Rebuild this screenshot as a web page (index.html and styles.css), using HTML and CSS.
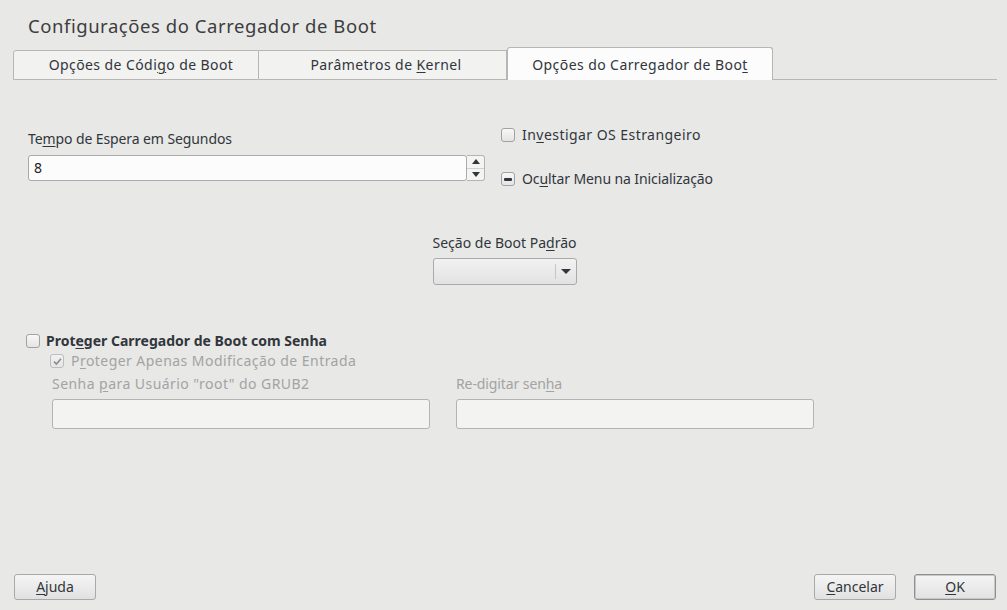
FILE: index.html
```html
<!DOCTYPE html>
<html lang="pt">
<head>
<meta charset="utf-8">
<title>Configurações do Carregador de Boot</title>
<link rel="stylesheet" href="styles.css">
</head>
<body>
<div class="dialog">
  <h1 class="title">Configurações do Carregador de Boot</h1>

  <div class="tabbar">
    <div class="tab tab-1">Opções de Códi<u>g</u>o de Boot</div>
    <div class="tab tab-2">Parâmetros de <u>K</u>ernel</div>
    <div class="tab tab-active">Opções do Carregador de Boo<u>t</u></div>
    <div class="tab-fill"></div>
  </div>

  <div class="row-top">
    <div class="col-left">
      <div class="label">Te<u>m</u>po de Espera em Segundos</div>
      <div class="spinbox">
        <div class="spin-input">8</div>
        <div class="spin-buttons">
          <div class="spin-btn"><span class="tri-up"></span></div>
          <div class="spin-btn"><span class="tri-down"></span></div>
        </div>
      </div>
    </div>
    <div class="col-right">
      <div class="check"><span class="box"></span><span class="check-text wide">In<u>v</u>estigar OS Estrangeiro</span></div>
      <div class="check check-2"><span class="box box-tri"><span class="dash"></span></span><span class="check-text">Oc<u>u</u>ltar Menu na Inicialização</span></div>
    </div>
  </div>

  <div class="combo-section">
    <div class="label">Seção de Boot Pa<u>d</u>rão</div>
    <div class="combo">
      <div class="combo-field"></div>
      <div class="combo-arrow"><span class="tri-down"></span></div>
    </div>
  </div>

  <div class="pw-section">
    <div class="check check-bold"><span class="box"></span><span class="check-text">Prot<u>e</u>ger Carregador de Boot com Senha</span></div>
    <div class="sub">
      <div class="check check-disabled">
        <span class="box box-disabled">
          <svg width="11" height="11" viewBox="0 0 11 11"><path d="M2 5.6 L4.4 8 L9 2.8" fill="none" stroke="#8c8c8c" stroke-width="1.6"/></svg>
        </span>
        <span class="check-text wide">P<u>r</u>oteger Apenas Modificação de Entrada</span>
      </div>
      <div class="pw-fields">
        <div class="field field-1">
          <div class="label disabled wide">Senha <u>p</u>ara Usuário "root" do GRUB2</div>
          <div class="input-disabled"></div>
        </div>
        <div class="field field-2">
          <div class="label disabled">Re-digitar sen<u>h</u>a</div>
          <div class="input-disabled"></div>
        </div>
      </div>
    </div>
  </div>

  <div class="spacer"></div>

  <div class="footer">
    <button class="btn"><u>A</u>juda</button>
    <div class="footer-gap"></div>
    <button class="btn"><u>C</u>ancelar</button>
    <button class="btn btn-default"><u>O</u>K</button>
  </div>
</div>
</body>
</html>
```

FILE: styles.css
```css
* { box-sizing: border-box; }
html, body {
  margin: 0;
  padding: 0;
  width: 1007px;
  height: 610px;
  overflow: hidden;
  background: #e8e8e7;
}
body {
  font-family: "Noto Sans", "Open Sans", sans-serif;
  font-size: 14px;
  color: #31363b;
}
u { text-decoration-thickness: 1px; text-underline-offset: 2px; }
.wide { letter-spacing: 0.45px; }

.dialog {
  display: flex;
  flex-direction: column;
  height: 610px;
}

.title {
  margin: 0;
  padding: 13px 0 0 28px;
  font-size: 18.5px;
  font-weight: normal;
  letter-spacing: 0.55px;
  line-height: 26px;
  color: #3d3d3d;
  height: 47px;
}

.tabbar {
  display: flex;
  align-items: flex-end;
  margin: 0 10px 0 13px;
  height: 33px;
}
.tab {
  height: 30px;
  background: #f2f2f1;
  border: 1px solid #b6b6b6;
  text-align: center;
  line-height: 28px;
  font-size: 14px;
  letter-spacing: 0.42px;
  color: #31363b;
  white-space: nowrap;
}
.tab-1 { width: 246px; border-radius: 3px 0 0 0; padding-left: 10px; }
.tab-2 { width: 248px; border-left: none; padding-left: 7px; }
.tab-active {
  width: 266px;
  height: 33px;
  background: #fcfcfc;
  border-bottom: none;
  border-radius: 3px 3px 0 0;
  line-height: 34px;
}
.tab-fill {
  flex: 1;
  border-bottom: 1px solid #b6b6b6;
  height: 1px;
}

.label { line-height: 18px; height: 18px; white-space: nowrap; }
.disabled { color: #a3a3a3; }

.row-top {
  display: flex;
  margin-top: 45px;
  padding-left: 28px;
}
.col-left { width: 457px; padding-top: 5px; }
.col-left .label { letter-spacing: -0.1px; }
.spinbox {
  display: flex;
  margin-top: 7px;
  height: 26px;
}
.spin-input {
  flex: 1;
  background: #fcfcfc;
  border: 1px solid #aaaaaa;
  border-radius: 3px;
  padding-left: 5px;
  line-height: 24px;
  color: #222;
}
.spin-buttons {
  width: 18px;
  display: flex;
  flex-direction: column;
  border: 1px solid #b4b4b4;
  border-left: none;
  border-radius: 0 3px 3px 0;
  background: #f4f4f3;
}
.spin-btn {
  flex: 1;
  display: flex;
  align-items: center;
  justify-content: center;
}
.spin-btn + .spin-btn { border-top: 1px solid #d0d0d0; }

.tri-up, .tri-down {
  width: 0;
  height: 0;
  border-left: 4.5px solid transparent;
  border-right: 4.5px solid transparent;
}
.tri-up { border-bottom: 5px solid #31363b; }
.tri-down { border-top: 5px solid #31363b; }

.col-right { margin-left: 16px; padding-top: 1px; }
.check {
  display: flex;
  align-items: center;
  height: 18px;
  line-height: 18px;
  white-space: nowrap;
}
.check-2 { margin-top: 26px; }
.check-2 .check-text { letter-spacing: -0.1px; }
.box {
  width: 14px;
  height: 14px;
  border: 1px solid #a2a2a2;
  border-radius: 3px;
  background: linear-gradient(#f8f8f8, #e4e4e4);
  margin-right: 7px;
  display: flex;
  align-items: center;
  justify-content: center;
  flex: none;
}
.dash { width: 8px; height: 3px; background: #31363b; border-radius: 1px; }
.check-text { color: #31363b; }

.combo-section {
  margin-top: 46px;
  display: flex;
  flex-direction: column;
  align-items: center;
  padding-left: 2px;
}
.combo {
  margin-top: 6px;
  width: 144px;
  height: 27px;
  display: flex;
  border: 1px solid #aaaaaa;
  border-radius: 3px;
  background: linear-gradient(#f2f2f2, #e2e2e2);
}
.combo-field { flex: 1; }
.combo-arrow {
  width: 21px;
  display: flex;
  align-items: center;
  justify-content: center;
  position: relative;
}
.combo-arrow::before {
  content: "";
  position: absolute;
  left: 0;
  top: 5px;
  bottom: 5px;
  border-left: 1px solid #c6c6c6;
}
.combo-arrow .tri-down { border-left-width: 5px; border-right-width: 5px; border-top-width: 5px; margin-left: 1px; }

.pw-section { margin-top: 46px; padding-left: 26px; }
.check-bold { font-weight: bold; margin-top: 1px; }
.check-bold .box { margin-right: 6px; }
.sub { padding-left: 24px; margin-top: 2px; }
.check-disabled .check-text { color: #a3a3a3; }
.box-disabled { background: linear-gradient(#f2f2f2, #e6e6e6); border-color: #bdbdbd; margin-right: 7px; }
.pw-fields { display: flex; gap: 26px; margin-top: 5px; padding-left: 2px; }
.field-1 { width: 378px; }
.field-2 { width: 358px; }
.field-2 .label { letter-spacing: -0.1px; }
.input-disabled {
  margin-top: 6px;
  height: 30px;
  background: #f3f3f2;
  border: 1px solid #b4b4b4;
  border-radius: 3px;
}

.spacer { flex: 1; }

.footer {
  display: flex;
  gap: 18px;
  padding: 0 11px 10px 14px;
}
.footer-gap { flex: 1; }
.btn {
  width: 82px;
  height: 26px;
  font-family: inherit;
  font-size: 14px;
  color: #31363b;
  background: linear-gradient(#f5f5f5, #e1e1e1);
  border: 1px solid #a9a9a9;
  border-radius: 3px;
  padding: 0;
  line-height: 22px;
}
.btn-default {
  border-color: #8f8f8f;
  box-shadow: inset 0 0 0 1px #c8c8c8;
}
```
